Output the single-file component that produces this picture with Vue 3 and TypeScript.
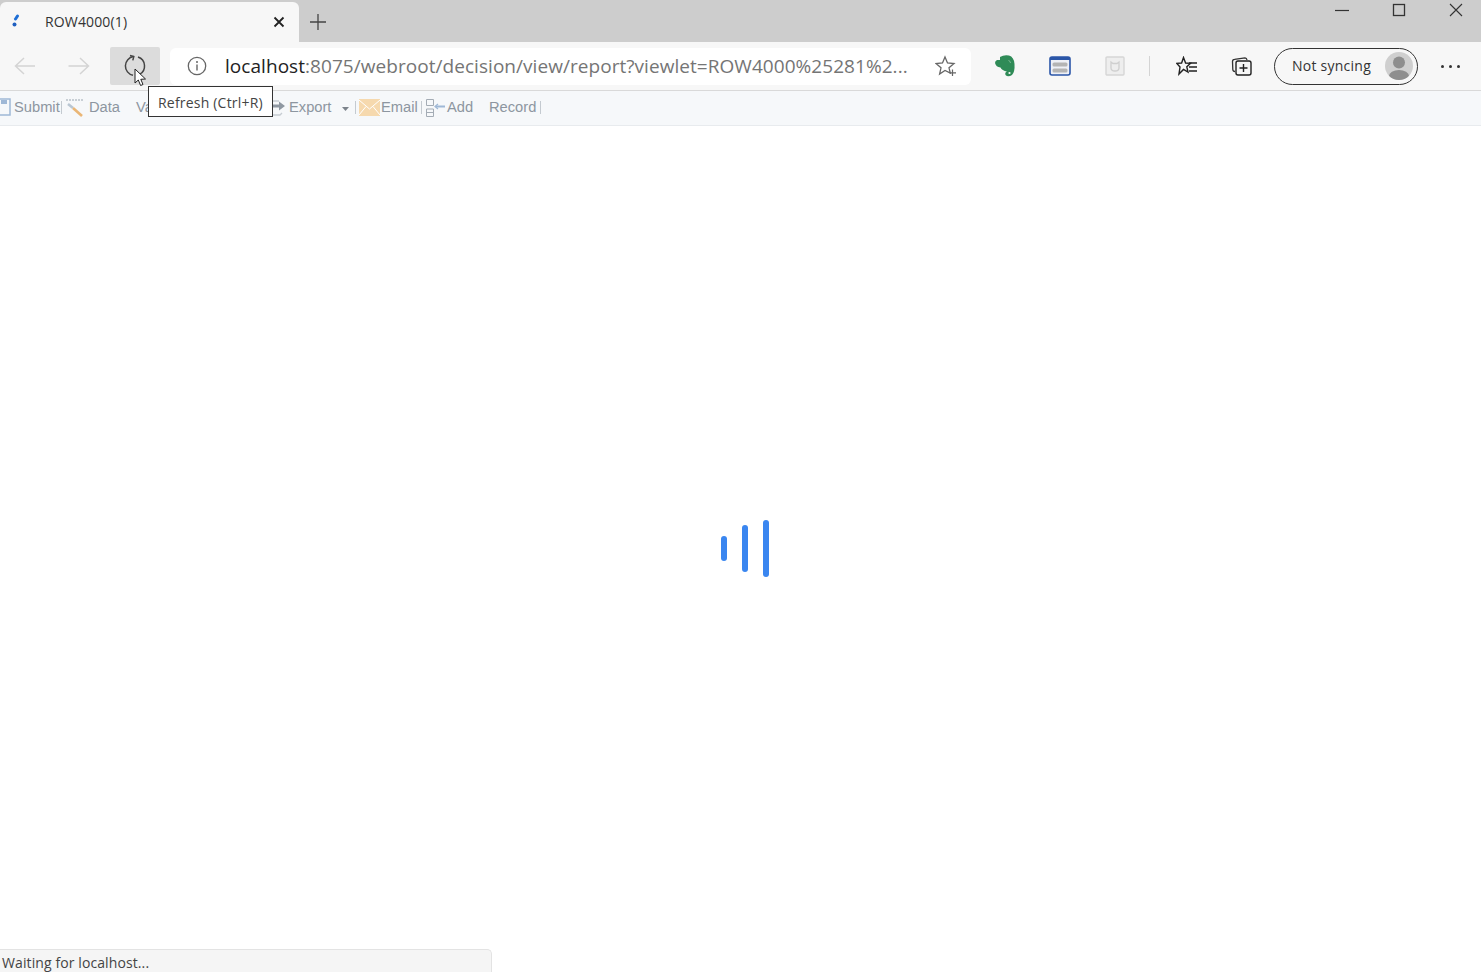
<script setup lang="ts">
const title = 'ROW4000(1)';
const host = 'localhost';
const rest = ':8075/webroot/decision/view/report?viewlet=ROW4000%25281%2...';
</script>
<template>
  <div class="browser">
    <div class="tabstrip">
      <div class="tab">
        <svg class="favicon" width="12" height="14" viewBox="0 0 12 14">
          <path d="M8.5 3 L6.5 6" fill="none" stroke="#1f6fd6" stroke-width="3" stroke-linecap="round" />
          <circle cx="5.5" cy="11.5" r="2" fill="#1f5fc0" />
        </svg>
        <span class="tab-title">{{ title }}</span>
        <svg class="tab-close" width="12" height="12" viewBox="0 0 12 12">
          <path d="M1.5 1.5 L10.5 10.5 M10.5 1.5 L1.5 10.5" stroke="#222" stroke-width="1.8" />
        </svg>
      </div>
      <svg class="new-tab" width="18" height="18" viewBox="0 0 18 18">
        <path d="M9 1 V17 M1 9 H17" stroke="#444" stroke-width="1.3" />
      </svg>
      <div class="win-buttons">
        <svg width="14" height="14" viewBox="0 0 14 14"><path d="M0 7.5 H14" stroke="#333" stroke-width="1.2" /></svg>
        <svg width="14" height="14" viewBox="0 0 14 14"><rect x="1.5" y="1.5" width="11" height="11" fill="none" stroke="#333" stroke-width="1.3" /></svg>
        <svg width="14" height="14" viewBox="0 0 14 14"><path d="M1 1 L13 13 M13 1 L1 13" stroke="#333" stroke-width="1.1" /></svg>
      </div>
    </div>

    <div class="toolbar">
      <div class="nav-btn">
        <svg width="22" height="20" viewBox="0 0 22 20"><path d="M1.5 10 H21 M10 2 L1.5 10 L10 18" fill="none" stroke="#d4d4d4" stroke-width="1.5" /></svg>
      </div>
      <div class="nav-btn nav-forward">
        <svg width="22" height="20" viewBox="0 0 22 20"><path d="M0.5 10 H20 M12 2 L20.5 10 L12 18" fill="none" stroke="#d4d4d4" stroke-width="1.5" /></svg>
      </div>
      <div class="nav-btn active">
        <svg width="24" height="24" viewBox="0 0 24 24">
          <path d="M10.5 2.6 A9.5 9.5 0 0 0 10 21.3" fill="none" stroke="#444" stroke-width="1.5" />
          <path d="M7 1.6 L10.8 2.6 L9.8 6.4" fill="none" stroke="#444" stroke-width="1.5" />
          <path d="M15 3 A9.5 9.5 0 0 1 16.5 20.4" fill="none" stroke="#444" stroke-width="1.5" />
        </svg>
      </div>

      <div class="address">
        <svg width="20" height="20" viewBox="0 0 20 20">
          <circle cx="10" cy="10" r="8.7" fill="none" stroke="#666" stroke-width="1.3" />
          <path d="M10 8.6 V14.5" stroke="#666" stroke-width="1.4" />
          <circle cx="10" cy="6" r="1" fill="#666" />
        </svg>
        <span class="url"><span class="host">{{ host }}</span>{{ rest }}</span>
        <svg width="22" height="22" viewBox="0 0 22 22">
          <path d="M10 2 L12.5 8 L19 8.5 L14 12.8 L15.3 18 L10 15.5 L4.6 19 L6 12.8 L1 8.5 L7.5 8 Z" fill="none" stroke="#666" stroke-width="1.3" />
          <path d="M17.5 14.5 V21 M14.5 17.8 H21" stroke="#666" stroke-width="1.2" />
        </svg>
      </div>

      <div class="ext ext-first">
        <svg width="22" height="24" viewBox="0 0 22 24">
          <path d="M6 3 Q10 0.5 15 1.5 Q20 3 20.5 10 Q21 18 18 21 Q14 23.5 11.5 21 Q10.5 18.5 13 17.5 Q8 16.5 6.5 13.5 Q2 13 1 9 Q1 7 3 6 L6 6 Z" fill="#2f8b57" />
          <path d="M14.5 6.5 Q16.5 7 16.5 9" fill="none" stroke="#7fb796" stroke-width="1" />
          <circle cx="15.5" cy="19" r="1.1" fill="#f7f7f7" />
        </svg>
      </div>
      <div class="ext">
        <svg width="22" height="22" viewBox="0 0 22 22">
          <rect x="1" y="2" width="20" height="18" rx="2" fill="#eef0f6" stroke="#2b56a8" stroke-width="1.6" />
          <rect x="1" y="2" width="20" height="3" fill="#2b56a8" />
          <rect x="3.5" y="7.5" width="15" height="4" rx="1.5" fill="#b4b4b4" />
          <rect x="3.5" y="13.5" width="15" height="4" rx="1.5" fill="#b4b4b4" />
        </svg>
      </div>
      <div class="ext">
        <svg width="22" height="22" viewBox="0 0 22 22">
          <rect x="2" y="2" width="18" height="18" rx="1" fill="#eee" stroke="#d6d6d6" stroke-width="1.4" />
          <path d="M7 7 L9 8.5 H13 L15 7 V13 Q15 16 11 16 Q7 16 7 13 Z" fill="none" stroke="#cfcfcf" stroke-width="1.3" />
        </svg>
      </div>
      <div class="divider"></div>
      <div class="ext ext-fav">
        <svg width="22" height="20" viewBox="0 0 22 20">
          <path d="M7.5 1.5 L9.6 7 L14.5 7.3 L10.8 10.8 L12 16 L7.5 13.4 L3 18 L4 11 L0.8 7.4 L5.6 7 Z" fill="none" stroke="#222" stroke-width="1.4" />
          <path d="M13 7 H21 M13 11 H21 M13 15 H21" stroke="#222" stroke-width="1.4" />
        </svg>
      </div>
      <div class="ext">
        <svg width="22" height="22" viewBox="0 0 22 22">
          <path d="M4 16.5 Q2 16.5 1.8 14.5 L1.5 6.5 Q1.5 4.5 3.5 4.3 L14 2.8 Q15.7 2.8 16 5" fill="none" stroke="#333" stroke-width="1.3" />
          <rect x="5" y="6" width="15" height="14" rx="2" fill="none" stroke="#222" stroke-width="1.4" />
          <path d="M12.5 9 V17 M8.5 13 H16.5" stroke="#222" stroke-width="1.4" />
        </svg>
      </div>
      <div class="sync">
        <span class="sync-label">Not syncing</span>
        <svg width="28" height="28" viewBox="0 0 28 28">
          <defs><clipPath id="avatar-clip"><circle cx="14" cy="14" r="14" /></clipPath></defs>
          <circle cx="14" cy="14" r="14" fill="#cfcfcf" />
          <g clip-path="url(#avatar-clip)" fill="#8e8e8e">
            <circle cx="14" cy="10.5" r="6" />
            <ellipse cx="14" cy="24" rx="10" ry="6" />
          </g>
        </svg>
      </div>
      <div class="more"><i></i><i></i><i></i></div>
    </div>

    <div class="report-bar">
      <svg class="ri" width="11" height="20" viewBox="0 0 11 20">
        <path d="M0 2 H10 V18 H0" fill="none" stroke="#9fb8d6" stroke-width="1.5" />
        <rect x="1" y="3" width="6" height="4" fill="#9fb8d6" />
      </svg>
      <span class="rt submit">Submit</span>
      <span class="sep"></span>
      <svg class="ri" width="20" height="20" viewBox="0 0 20 20">
        <path d="M1 3 H19" stroke="#9aa5b0" stroke-width="1.2" stroke-dasharray="2 1" />
        <path d="M3 7 L8 11" stroke="#b9c6d2" stroke-width="2.6" />
        <path d="M8 11 L17 19" stroke="#eab676" stroke-width="2.6" />
      </svg>
      <span class="rt data">Data</span>
      <span class="rt va">Va</span>
      <svg class="ri export-ic" width="16" height="20" viewBox="0 0 16 20">
        <path d="M1 4 H9 M1 14 V18 H10 L12 16" fill="none" stroke="#c6ccd2" stroke-width="1.3" />
        <path d="M0 7.5 H9 V4.5 L15 9 L9 13.5 V10.5 H0 Z" fill="#8f98a2" />
      </svg>
      <span class="rt export">Export</span>
      <svg class="caret" width="7" height="4" viewBox="0 0 7 4"><path d="M0 0 H7 L3.5 4 Z" fill="#7c838b" /></svg>
      <span class="sep sep-export"></span>
      <svg class="ri" width="21" height="17" viewBox="0 0 21 17">
        <rect width="21" height="17" fill="#f6d9ae" />
        <path d="M0 1 L10.5 10 L21 1 M0 16 L7 7.5 M21 16 L14 7.5" fill="none" stroke="#fff" stroke-width="1" />
      </svg>
      <span class="rt email">Email</span>
      <span class="sep"></span>
      <svg class="ri" width="21" height="20" viewBox="0 0 21 20">
        <path d="M1.5 2.5 H8.5 V8.5 H1.5 Z M1.5 12 H8.5 V19.5 H1.5 Z M1.5 15.5 H8.5" fill="none" stroke="#a4acb5" stroke-width="1" />
        <path d="M11 9.5 H20" stroke="#9fb8d6" stroke-width="2" />
        <path d="M13 7 L10 9.5 L13 12" fill="none" stroke="#9fb8d6" stroke-width="1.2" />
      </svg>
      <span class="rt add">Add</span>
      <span class="rt record">Record</span>
      <span class="sep"></span>
    </div>

    <main class="page">
      <div class="loader">
        <i class="bar-a"></i>
        <i class="bar-b"></i>
        <i class="bar-c"></i>
      </div>
    </main>

    <div class="tooltip">Refresh (Ctrl+R)</div>
    <svg class="cursor" width="13" height="19" viewBox="0 0 13 19">
      <path d="M1 1 V15 L4.3 12 L6.6 17.5 L9 16.5 L6.8 11.3 L11.5 11 Z" fill="#fff" stroke="#222" stroke-width="1" />
    </svg>
    <div class="status">Waiting for localhost...</div>
  </div>
</template>

<style scoped>
.browser {
  position: relative;
  width: 1481px;
  height: 972px;
  display: flex;
  flex-direction: column;
  overflow: hidden;
  background: #fff;
  font-family: "Open Sans", "Noto Sans", sans-serif;
}

.tabstrip {
  height: 42px;
  flex: none;
  display: flex;
  align-items: flex-end;
  background: #cdcdcd;
}

.tab {
  width: 299px;
  height: 40px;
  display: flex;
  align-items: center;
  padding: 0 14px 0 9px;
  box-sizing: border-box;
  background: #f7f7f7;
  border-radius: 6px 6px 0 0;
}

.favicon {
  margin-top: -5px;
}

.tab-title {
  margin-left: 24px;
  margin-bottom: 2px;
  flex: 1;
  font-size: 14px;
  letter-spacing: 0.15px;
  color: #333;
}

.new-tab {
  margin: 0 0 11px 10px;
}

.win-buttons {
  margin-left: auto;
  align-self: flex-start;
  display: flex;
  gap: 43px;
  padding: 3px 18px 0 0;
}

.toolbar {
  height: 48px;
  flex: none;
  display: flex;
  align-items: center;
  box-sizing: border-box;
  background: #f7f7f7;
}

.nav-btn {
  width: 50px;
  height: 38px;
  margin-right: 4px;
  display: flex;
  align-items: center;
  justify-content: center;
  border-radius: 2px;
}

.nav-forward {
  margin-right: 6px;
}

.nav-btn.active {
  background: #dcdcdc;
  margin-right: 10px;
}

.address {
  width: 801px;
  height: 37px;
  display: flex;
  align-items: center;
  padding: 0 14px 0 17px;
  box-sizing: border-box;
  background: #fff;
  border-radius: 6px;
}

.url {
  flex: 1;
  margin-left: 18px;
  font-size: 19px;
  letter-spacing: 0.05px;
  color: #757575;
  white-space: nowrap;
  overflow: hidden;
}

.host {
  color: #222;
}

.ext {
  width: 55px;
  display: flex;
  justify-content: center;
  flex: none;
}

.ext-first {
  margin-left: 6px;
}

.divider {
  width: 1px;
  height: 20px;
  margin: 0 10px 0 7px;
  background: #d4d4d4;
}

.ext-fav {
  width: 54px;
}

.sync {
  width: 144px;
  height: 37px;
  margin-left: 5px;
  display: flex;
  align-items: center;
  justify-content: space-between;
  padding: 0 4px 0 17px;
  box-sizing: border-box;
  border: 1.5px solid #333;
  border-radius: 19px;
  color: #333;
}

.sync-label {
  margin-bottom: 2px;
  font-size: 14px;
  letter-spacing: 0.25px;
}

.more {
  margin-left: 23px;
  display: flex;
  gap: 5px;
}

.more i {
  width: 3px;
  height: 3px;
  border-radius: 50%;
  background: #333;
}

.report-bar {
  height: 36px;
  flex: none;
  display: flex;
  align-items: center;
  padding-bottom: 2px;
  box-sizing: border-box;
  border-top: 1px solid #d9d9d9;
  border-bottom: 1px solid #e8ebee;
  background: #f6f8fa;
  font-family: "Liberation Sans", Arial, sans-serif;
  font-size: 14.7px;
  color: #8d96a0;
  white-space: nowrap;
}

.ri,
.rt {
  flex: none;
}

.rt {
  margin-bottom: 1px;
}

.sep {
  width: 1px;
  height: 13px;
  margin: 0 3px 0 2px;
  background: #c4cad0;
  flex: none;
}

.submit {
  margin-left: 3px;
  width: 45px;
}

.data {
  margin-left: 4px;
  width: 32px;
}

.va {
  margin-left: 15px;
  width: 16px;
}

.export-ic {
  margin-left: 118px;
}

.export {
  margin-left: 3px;
  width: 44px;
}

.caret {
  margin-left: 9px;
  margin-top: 4px;
  flex: none;
}

.sep-export {
  margin-left: 6px;
}

.email {
  margin-left: 1px;
  width: 38px;
}

.add {
  margin-left: 1px;
  width: 27px;
}

.record {
  margin-left: 15px;
  width: 49px;
}

.page {
  flex: 1;
  display: flex;
  align-items: center;
  justify-content: center;
  padding-left: 9px;
  background: #fff;
}

.loader {
  display: flex;
  align-items: center;
  gap: 15px;
  margin-top: -1px;
}

.loader i {
  width: 6px;
  border-radius: 3px;
  background: #3a86f0;
}

.bar-a {
  height: 25px;
}

.bar-b {
  height: 47px;
}

.bar-c {
  height: 57px;
}

.tooltip {
  position: absolute;
  left: 148px;
  top: 86px;
  width: 125px;
  height: 31px;
  box-sizing: border-box;
  padding-left: 9px;
  line-height: 31px;
  border: 1px solid #333;
  background: #fff;
  font-size: 14px;
  letter-spacing: 0.2px;
  color: #444;
  white-space: nowrap;
}

.cursor {
  position: absolute;
  left: 134px;
  top: 68px;
}

.status {
  position: absolute;
  left: 0;
  bottom: 0;
  width: 492px;
  height: 23px;
  box-sizing: border-box;
  padding: 4px 0 0 2px;
  border: 1px solid #e3e3e3;
  border-bottom: 0;
  border-left: 0;
  border-radius: 0 5px 0 0;
  background: #f5f5f5;
  font-size: 14px;
  line-height: 18px;
  letter-spacing: 0.1px;
  color: #444;
}
</style>
